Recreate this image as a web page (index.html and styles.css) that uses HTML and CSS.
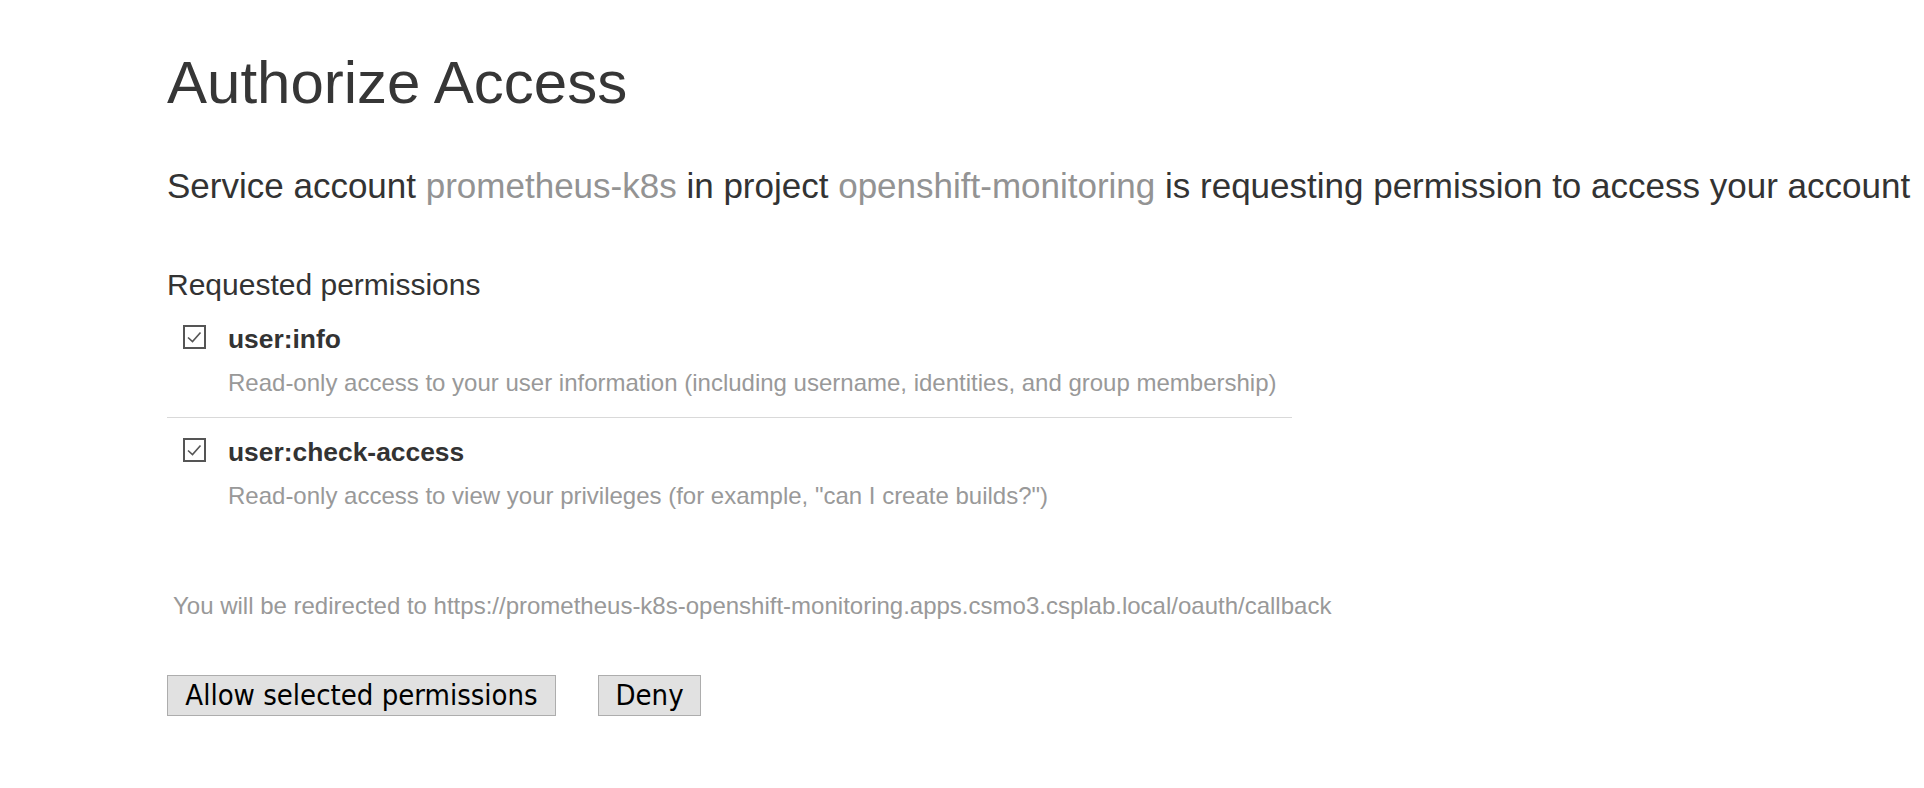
FILE: index.html
```html
<!DOCTYPE html>
<html lang="en">
<head>
<meta charset="utf-8">
<title>Authorize Access</title>
<link rel="stylesheet" href="styles.css">
</head>
<body>
<main class="page">
  <h1 class="title">Authorize Access</h1>
  <p class="intro">Service account <span class="muted">prometheus-k8s</span> in project <span class="muted">openshift-monitoring</span> is requesting permission to access your account</p>

  <form class="grant">
    <h3 class="req-title">Requested permissions</h3>
    <ul class="perms">
      <li class="perm">
        <span class="check" aria-hidden="true">
          <svg viewBox="0 0 19 20" width="19" height="20"><path d="M3 10.5 L7.5 14.5 L15.5 5.5" fill="none" stroke="#555" stroke-width="1.6"/></svg>
        </span>
        <div class="perm-body">
          <div class="perm-name">user:info</div>
          <div class="perm-desc">Read-only access to your user information (including username, identities, and group membership)</div>
        </div>
      </li>
      <li class="perm">
        <span class="check" aria-hidden="true">
          <svg viewBox="0 0 19 20" width="19" height="20"><path d="M3 10.5 L7.5 14.5 L15.5 5.5" fill="none" stroke="#555" stroke-width="1.6"/></svg>
        </span>
        <div class="perm-body">
          <div class="perm-name">user:check-access</div>
          <div class="perm-desc">Read-only access to view your privileges (for example, "can I create builds?")</div>
        </div>
      </li>
    </ul>

    <p class="redirect">You will be redirected to https://prometheus-k8s-openshift-monitoring.apps.csmo3.csplab.local/oauth/callback</p>

    <div class="actions">
      <button type="button" class="btn btn-allow">Allow selected permissions</button>
      <button type="button" class="btn btn-deny">Deny</button>
    </div>
  </form>
</main>
</body>
</html>
```

FILE: styles.css
```css
html, body {
  margin: 0;
  background: #fff;
}

body {
  font-family: "Liberation Sans", Arial, sans-serif;
  color: #333;
}

.page {
  padding: 50px 0 0 167px;
}

.title {
  margin: 0;
  font-size: 60px;
  line-height: 66px;
  font-weight: normal;
  color: #363636;
}

.intro {
  margin: 50px 0 0;
  font-size: 35px;
  line-height: 40px;
  white-space: nowrap;
  color: #333;
}

.muted {
  color: #939393;
}

.grant {
  margin: 0;
}

.req-title {
  margin: 61px 0 1px;
  font-size: 30px;
  line-height: 36px;
  font-weight: normal;
  color: #333;
}

.perms {
  list-style: none;
  margin: 0;
  padding: 0;
  width: 1125px;
}

.perm {
  display: flex;
  align-items: flex-start;
  padding: 18px 0 19px;
  border-bottom: 1px solid #d9d9d9;
}

.perm:first-child {
  padding-top: 19px;
}

.perm:last-child {
  border-bottom: none;
}

.check {
  flex: none;
  box-sizing: border-box;
  width: 23px;
  height: 24px;
  margin: 2px 22px 0 16px;
  border: 2px solid #555;
  display: flex;
  align-items: center;
  justify-content: center;
}

.check svg {
  display: block;
}

.perm-body {
  display: flex;
  flex-direction: column;
}

.perm-name {
  font-size: 26.4px;
  line-height: 32px;
  font-weight: bold;
  color: #333;
}

.perm-desc {
  margin-top: 13px;
  font-size: 24px;
  line-height: 30px;
  color: #999;
  white-space: nowrap;
}

.redirect {
  margin: 61px 0 0 6px;
  font-size: 24px;
  line-height: 30px;
  color: #999;
  white-space: nowrap;
}

.actions {
  display: flex;
  gap: 42px;
  margin-top: 54px;
}

.btn {
  box-sizing: border-box;
  height: 41px;
  padding: 0;
  margin: 0;
  border: 1px solid #adadad;
  border-radius: 0;
  background: #e1e1e1;
  color: #000;
  font-family: "DejaVu Sans Condensed", "DejaVu Sans", sans-serif;
  font-stretch: condensed;
  font-size: 29px;
  line-height: 39px;
  text-align: center;
  white-space: nowrap;
}

.btn-allow {
  width: 389px;
}

.btn-deny {
  width: 103px;
}
```
